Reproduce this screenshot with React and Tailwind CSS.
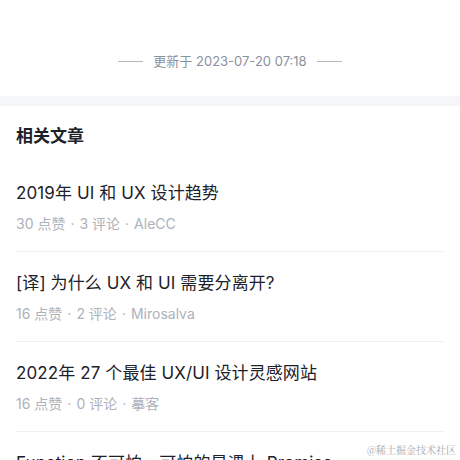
const articles = [
  { title: "2019年 UI 和 UX 设计趋势", likes: 30, comments: 3, author: "AleCC" },
  { title: "[译] 为什么 UX 和 UI 需要分离开?", likes: 16, comments: 2, author: "Mirosalva" },
  { title: "2022年 27 个最佳 UX/UI 设计灵感网站", likes: 16, comments: 0, author: "摹客" },
  { title: "Function 不可怕，可怕的是遇上 Promise", likes: 12, comments: 1, author: "Kevin" },
];

function Dot() {
  return <span className="mx-[5px]">·</span>;
}

function ArticleItem({ item }) {
  return (
    <div className="pt-[19px] pb-[17px] border-b border-[#f0f1f2]">
      <div className="text-[17px] leading-[24px] text-[#1d2129] tracking-[0.1px]">{item.title}</div>
      <div className="mt-[9px] text-[14px] leading-[20px] text-[#adb2ba]">
        {item.likes} 点赞<Dot />{item.comments} 评论<Dot />{item.author}
      </div>
    </div>
  );
}

export default function App() {
  return (
    <div
      className="relative w-[460px] h-[460px] overflow-hidden bg-white"
      style={{ fontFamily: 'Inter, "Noto Sans CJK SC", sans-serif' }}
    >
      <div className="h-[96px] pt-[52px] flex justify-center">
        <div className="flex items-center gap-[10px] h-[18px]">
          <div className="w-[25px] h-px bg-[#b5b9c1]" />
          <span className="text-[13px] leading-[18px] text-[#8a919f]">更新于 2023-07-20 07:18</span>
          <div className="w-[25px] h-px bg-[#b5b9c1]" />
        </div>
      </div>

      <div className="h-[10px] bg-[#f5f6f7]" />

      <div className="px-4 pt-[18px]">
        <h2 className="text-[17px] leading-[24px] font-semibold text-[#1d2129] mb-[14px]">相关文章</h2>
        {articles.map((a) => (
          <ArticleItem key={a.title} item={a} />
        ))}
      </div>

      <div
        className="absolute right-[4px] bottom-[4px] text-[10px] leading-[12px] text-[#a3a7ae]"
        style={{ fontFamily: '"Noto Serif CJK SC", "Noto Sans CJK SC", serif' }}
      >
        @稀土掘金技术社区
      </div>
    </div>
  );
}
